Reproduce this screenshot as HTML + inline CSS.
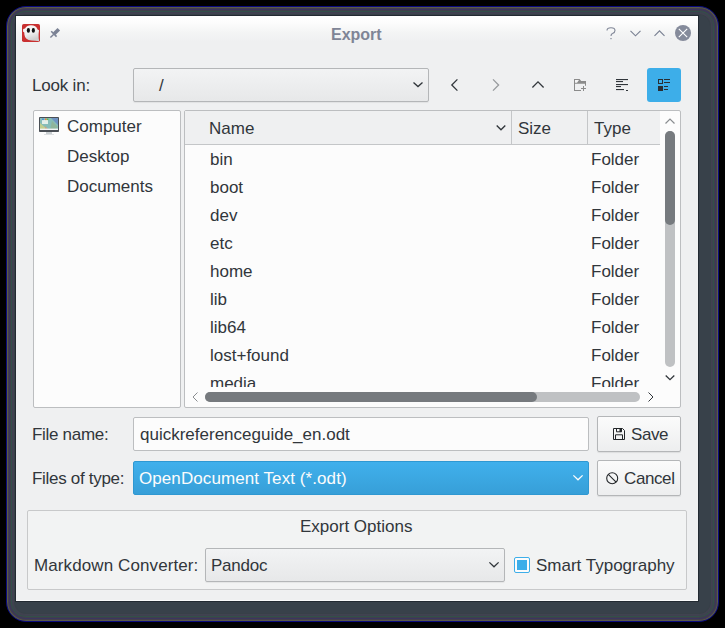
<!DOCTYPE html>
<html><head><meta charset="utf-8">
<style>
html,body{margin:0;padding:0;}
body{width:725px;height:628px;background:#000;position:relative;overflow:hidden;font-family:"Liberation Sans",sans-serif;color:#31363b;}
.a{position:absolute;}
.t{position:absolute;font-size:17px;line-height:22px;white-space:nowrap;}
.frame{left:6px;top:6px;width:713px;height:616px;background:#38414a;border:1px solid #0a0a80;box-sizing:border-box;border-radius:20px;box-shadow:inset 0 0 0 1px #5a5a4a,inset 0 0 0 2px #45404a,inset 0 0 0 3px #3a3660,inset 0 0 0 4px #40404a,inset 0 0 0 5px #32504a,inset 0 0 0 6px #404050,inset 0 0 0 7px #404350,inset 0 0 0 8px #384048;}
.win{left:16px;top:16px;width:682px;height:585px;background:linear-gradient(#ffffff 0px,#fdfdfd 6px,#f4f5f5 16px,#eff0f1 26px,#eff0f1);box-shadow:0 0 0 1px #232a32, inset 0 -1px 0 #fbfbfb;}
.box{background:#fcfcfc;border:1px solid #bcbec0;border-radius:2px;box-sizing:border-box;}
.btn{background:linear-gradient(#fbfbfb,#edeeef);border:1px solid #b4b6b8;border-radius:2px;box-sizing:border-box;box-shadow:0 1px 1px rgba(0,0,0,0.08);}
.cmb{background:linear-gradient(#f2f3f4,#e7e8e9);border:1px solid #b4b6b8;border-radius:2px;box-sizing:border-box;box-shadow:0 1px 1px rgba(0,0,0,0.06);}
svg{position:absolute;overflow:visible;}
</style></head>
<body>
<div class="a frame"></div>
<div class="a win"></div>

<!-- title bar -->
<svg style="left:22px;top:24px" width="18" height="18" viewBox="0 0 18 18">
  <defs><linearGradient id="gh" x1="0" y1="0" x2="0.3" y2="1"><stop offset="0" stop-color="#fafafa"/><stop offset="0.6" stop-color="#eeeeee"/><stop offset="1" stop-color="#cfcfcf"/></linearGradient></defs>
  <rect x="0" y="0" width="18" height="18" rx="1.8" fill="#c93030"/>
  <path d="M3 4.6 Q5 1.3 9 1.3 Q14 1.3 15.6 5.4 L17 6.3 L16.6 10 Q16.4 14 17.2 17.2 Q13 17 9.5 16.6 Q3 16.2 2.4 10.5 L2.3 8.4 L1 7.6 L1.2 5 Z" fill="url(#gh)"/>
  <ellipse cx="6.4" cy="6.4" rx="1.6" ry="2.35" fill="#111"/>
  <ellipse cx="11.35" cy="6.4" rx="1.6" ry="2.35" fill="#111"/>
</svg>
<svg style="left:46px;top:24px" width="18" height="18" viewBox="0 0 18 18">
  <path d="M12.8 5.2 L8.2 9.8" stroke="#7b8295" stroke-width="3.6"/>
  <path d="M5.2 7.2 L10.6 12.6" stroke="#7b8295" stroke-width="1.6"/>
  <path d="M4.4 13.6 L7.8 10.2" stroke="#7b8295" stroke-width="1.4"/>
</svg>
<div class="t" style="left:331px;top:24px;font-weight:bold;font-size:16px;color:#7f8596;">Export</div>
<svg style="left:606px;top:27px" width="10" height="13" viewBox="0 0 10 13">
  <path d="M1 3.5 Q1 0.7 5 0.7 Q9 0.7 9 3.5 Q9 5.5 6.5 6.5 Q5 7 5 9" fill="none" stroke="#7f8596" stroke-width="1.1"/>
  <rect x="4.4" y="11" width="1.2" height="1.2" fill="#7f8596"/>
</svg>
<svg style="left:630px;top:30px" width="11" height="7" viewBox="0 0 11 7">
  <path d="M0.5 0.8 L5.5 5.8 L10.5 0.8" fill="none" stroke="#7a8193" stroke-width="1.15"/>
</svg>
<svg style="left:654px;top:30px" width="11" height="7" viewBox="0 0 11 7">
  <path d="M0.5 5.8 L5.5 0.8 L10.5 5.8" fill="none" stroke="#7a8193" stroke-width="1.15"/>
</svg>
<svg style="left:675px;top:25px" width="16" height="16" viewBox="0 0 16 16">
  <circle cx="8" cy="8" r="8" fill="#858b9b"/>
  <path d="M3.8 3.8 L12.2 12.2 M12.2 3.8 L3.8 12.2" stroke="#fff" stroke-width="1.1"/>
</svg>

<!-- look in row -->
<div class="t" style="left:32px;top:75px;letter-spacing:-0.2px;">Look in:</div>
<div class="a cmb" style="left:133px;top:68px;width:296px;height:34px;"></div>
<div class="t" style="left:159px;top:75px;">/</div>
<svg style="left:413px;top:82px" width="10" height="6" viewBox="0 0 10 6">
  <path d="M0.5 0.4 L5 4.6 L9.5 0.4" fill="none" stroke="#31363b" stroke-width="1.3"/>
</svg>
<svg style="left:451px;top:79px" width="8" height="12" viewBox="0 0 8 12">
  <path d="M6.4 0.4 L0.8 6 L6.4 11.6" fill="none" stroke="#31363b" stroke-width="1.3"/>
</svg>
<svg style="left:492px;top:79px" width="8" height="12" viewBox="0 0 8 12">
  <path d="M1 0.4 L6.6 6 L1 11.6" fill="none" stroke="#979a9d" stroke-width="1.3"/>
</svg>
<svg style="left:532px;top:81px" width="13" height="7" viewBox="0 0 13 7">
  <path d="M0.4 6.5 L6 0.9 L11.6 6.5" fill="none" stroke="#31363b" stroke-width="1.3"/>
</svg>
<svg style="left:574px;top:79px" width="12" height="12" viewBox="0 0 12 12">
  <g fill="#8b8b8b">
  <rect x="0" y="0" width="1" height="12"/>
  <rect x="0" y="11" width="7" height="1"/>
  <path d="M0 0 H5.6 L7.2 2 H12 V6.7 H11 V4.7 H0 Z"/>
  <rect x="9" y="7" width="1" height="5"/>
  <rect x="7" y="9" width="5" height="1"/>
  </g>
  <path d="M1 1 H5 L3 3.7 H1 Z" fill="#f6f6f6"/>
</svg>
<svg style="left:616px;top:79px" width="13" height="12" viewBox="0 0 13 12">
  <g fill="#31363b">
  <rect x="0" y="0" width="12" height="1.1"/>
  <rect x="0" y="2" width="7" height="1.1"/>
  <rect x="0" y="5" width="12" height="1.1"/>
  <rect x="0" y="7" width="5" height="1.1"/>
  <rect x="0" y="10" width="8" height="1.1"/>
  <rect x="10" y="11" width="2" height="1"/>
  </g>
</svg>
<div class="a" style="left:647px;top:68px;width:34px;height:34px;background:#3daee9;border-radius:3px;"></div>
<svg style="left:658px;top:79px" width="13" height="12" viewBox="0 0 13 12">
  <rect x="0.5" y="0.5" width="4" height="4" fill="none" stroke="#2a2e32" stroke-width="1"/>
  <rect x="0" y="7" width="5" height="5" fill="#2a2e32"/>
  <g fill="#2a2e32">
  <rect x="6" y="0" width="6" height="1"/>
  <rect x="6" y="3" width="6" height="1"/>
  <rect x="6" y="7" width="4" height="1"/>
  <rect x="6" y="10" width="4" height="1"/>
  </g>
</svg>

<!-- sidebar -->
<div class="a box" style="left:33px;top:110px;width:148px;height:298px;"></div>
<svg style="left:39px;top:117px" width="20" height="19" viewBox="0 0 20 19">
  <rect x="0" y="0" width="20" height="15" rx="0.8" fill="#4a4f55"/>
  <rect x="1" y="1" width="18" height="12" fill="#86bdb9"/>
  <path d="M1 6 L9 13 H1 Z" fill="#c2cf8f"/>
  <path d="M6 9 L10 13 H6 Z" fill="#c7a582"/>
  <path d="M12 1 H19 V8 Z" fill="#6f93c2"/>
  <path d="M13 4 L19 10 L15 13 H11 Z" fill="#8fb59b"/>
  <rect x="3" y="3" width="6" height="4" fill="#e3efe9"/>
  <rect x="3" y="1.5" width="1.8" height="1.6" fill="#4e8fd8"/>
  <rect x="6" y="1.5" width="1.6" height="1.6" fill="#f27c3c"/>
  <rect x="8" y="1.5" width="1.4" height="1.6" fill="#5ec44b"/>
  <rect x="1" y="11.6" width="18" height="1.4" fill="#f2f4f4"/>
  <rect x="7" y="15" width="6" height="2" fill="#c9ced1"/>
  <rect x="5" y="17" width="10" height="1" fill="#dde0e2"/>
</svg>
<div class="t" style="left:67px;top:116px;">Computer</div>
<div class="t" style="left:67px;top:146px;">Desktop</div>
<div class="t" style="left:67px;top:176px;">Documents</div>

<!-- file list -->
<div class="a box" style="left:184px;top:110px;width:497px;height:298px;"></div>
<div class="a" style="left:185px;top:111px;width:475px;height:33px;background:#eff0f1;border-bottom:1px solid #c4c6c8;"></div>
<div class="a" style="left:511px;top:111px;width:1px;height:33px;background:#c4c6c8;"></div>
<div class="a" style="left:587px;top:111px;width:1px;height:33px;background:#c4c6c8;"></div>
<div class="t" style="left:209px;top:118px;">Name</div>
<svg style="left:496px;top:125px" width="10" height="6" viewBox="0 0 10 6">
  <path d="M0.7 0.6 L5 4.8 L9.3 0.6" fill="none" stroke="#31363b" stroke-width="1.35"/>
</svg>
<div class="t" style="left:518px;top:118px;">Size</div>
<div class="t" style="left:594px;top:118px;">Type</div>

<div class="a" style="left:185px;top:145px;width:475px;height:242px;overflow:hidden;">
  <div class="t" style="left:25px;top:4px;">bin</div>
  <div class="t" style="left:25px;top:32px;">boot</div>
  <div class="t" style="left:25px;top:60px;">dev</div>
  <div class="t" style="left:25px;top:88px;">etc</div>
  <div class="t" style="left:25px;top:116px;">home</div>
  <div class="t" style="left:25px;top:144px;">lib</div>
  <div class="t" style="left:25px;top:172px;">lib64</div>
  <div class="t" style="left:25px;top:200px;">lost+found</div>
  <div class="t" style="left:25px;top:228px;">media</div>
  <div class="t" style="left:406px;top:4px;">Folder</div>
  <div class="t" style="left:406px;top:32px;">Folder</div>
  <div class="t" style="left:406px;top:60px;">Folder</div>
  <div class="t" style="left:406px;top:88px;">Folder</div>
  <div class="t" style="left:406px;top:116px;">Folder</div>
  <div class="t" style="left:406px;top:144px;">Folder</div>
  <div class="t" style="left:406px;top:172px;">Folder</div>
  <div class="t" style="left:406px;top:200px;">Folder</div>
  <div class="t" style="left:406px;top:228px;">Folder</div>
</div>
<!-- vertical scrollbar -->
<svg style="left:665px;top:118px" width="10" height="6" viewBox="0 0 10 6">
  <path d="M0.5 5.5 L5 1 L9.5 5.5" fill="none" stroke="#8a8d90" stroke-width="1.2"/>
</svg>
<div class="a" style="left:665px;top:131px;width:10px;height:236px;background:#bfc1c3;border-radius:5px;"></div>
<div class="a" style="left:665px;top:131px;width:10px;height:94px;background:#767a7e;border-radius:5px;"></div>
<svg style="left:665px;top:375px" width="10" height="6" viewBox="0 0 10 6">
  <path d="M0.7 0.5 L5 4.7 L9.3 0.5" fill="none" stroke="#31363b" stroke-width="1.3"/>
</svg>
<!-- horizontal scrollbar -->
<svg style="left:192px;top:392px" width="6" height="10" viewBox="0 0 6 10">
  <path d="M5.5 0.5 L1 5 L5.5 9.5" fill="none" stroke="#8a8d90" stroke-width="1"/>
</svg>
<div class="a" style="left:205px;top:392px;width:435px;height:10px;background:#bfc1c3;border-radius:5px;"></div>
<div class="a" style="left:205px;top:392px;width:332px;height:10px;background:#767a7e;border-radius:5px;"></div>
<svg style="left:648px;top:392px" width="6" height="10" viewBox="0 0 6 10">
  <path d="M0.5 0.5 L5 5 L0.5 9.5" fill="none" stroke="#31363b" stroke-width="1"/>
</svg>

<!-- file name -->
<div class="t" style="left:32px;top:424px;letter-spacing:-0.3px;">File name:</div>
<div class="a box" style="left:133px;top:417px;width:456px;height:34px;"></div>
<div class="t" style="left:140px;top:424px;">quickreferenceguide_en.odt</div>
<div class="a btn" style="left:597px;top:416px;width:84px;height:36px;"></div>
<svg style="left:613px;top:428px" width="12" height="12" viewBox="0 0 12 12">
  <path d="M0.5 0.5 H9.5 L11.5 2.5 V11.5 H0.5 Z" fill="none" stroke="#232629" stroke-width="1"/>
  <path d="M3.5 0.5 V3.8 H8.5 V0.5" fill="none" stroke="#232629" stroke-width="1"/>
  <rect x="6.5" y="0.5" width="2" height="3.5" fill="#232629"/>
  <path d="M2.5 11.5 V6.8 H9.5 V11.5" fill="none" stroke="#232629" stroke-width="1"/>
</svg>
<div class="t" style="left:631px;top:424px;letter-spacing:-0.4px;">Save</div>

<!-- files of type -->
<div class="t" style="left:32px;top:468px;letter-spacing:-0.3px;">Files of type:</div>
<div class="a" style="left:133px;top:461px;width:456px;height:34px;background:linear-gradient(#40b0ec,#379fd8);border:1px solid #2f98d2;border-radius:2px;box-sizing:border-box;"></div>
<div class="t" style="left:139px;top:468px;color:#fcfcfc;letter-spacing:0.08px;">OpenDocument Text (*.odt)</div>
<svg style="left:573px;top:475px" width="10" height="6" viewBox="0 0 10 6">
  <path d="M0.4 0.4 L5 4.8 L9.6 0.4" fill="none" stroke="#fcfcfc" stroke-width="1.3"/>
</svg>
<div class="a btn" style="left:597px;top:460px;width:84px;height:36px;"></div>
<svg style="left:606px;top:472px" width="13" height="13" viewBox="0 0 13 13">
  <circle cx="6.2" cy="6.2" r="5.5" fill="none" stroke="#232629" stroke-width="1.1"/>
  <path d="M2.3 2.3 L10.1 10.1" stroke="#232629" stroke-width="1.1"/>
</svg>
<div class="t" style="left:624px;top:468px;letter-spacing:-0.4px;">Cancel</div>

<!-- export options -->
<div class="a" style="left:27px;top:510px;width:660px;height:80px;background:#f2f3f3;border:1px solid #c8c9ca;border-radius:2px;box-sizing:border-box;"></div>
<div class="t" style="left:300px;top:516px;">Export Options</div>
<div class="t" style="left:34px;top:555px;letter-spacing:0.1px;">Markdown Converter:</div>
<div class="a cmb" style="left:205px;top:548px;width:300px;height:34px;"></div>
<div class="t" style="left:211px;top:555px;letter-spacing:-0.25px;">Pandoc</div>
<svg style="left:489px;top:562px" width="10" height="6" viewBox="0 0 10 6">
  <path d="M0.4 0.4 L5 4.8 L9.6 0.4" fill="none" stroke="#31363b" stroke-width="1.3"/>
</svg>
<div class="a" style="left:514px;top:557px;width:16px;height:16px;border:1px solid #3daee9;border-radius:2px;box-sizing:border-box;background:#fcfcfc;"></div>
<div class="a" style="left:517px;top:560px;width:10px;height:10px;background:#3daee9;"></div>
<div class="t" style="left:536px;top:555px;">Smart Typography</div>
</body></html>
